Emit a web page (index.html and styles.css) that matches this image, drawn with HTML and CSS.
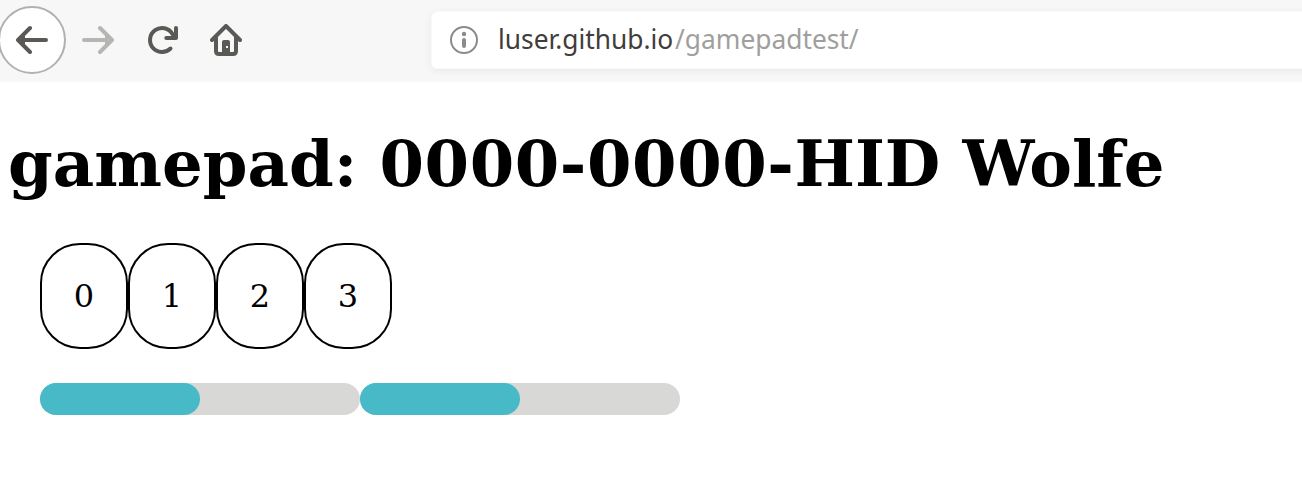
FILE: index.html
```html
<!DOCTYPE html>
<html lang="en">
<head>
<meta charset="utf-8">
<title>Gamepad test</title>
<link rel="stylesheet" href="styles.css">
</head>
<body>
<header class="toolbar">
  <nav class="nav">
    <button class="nav-button back" aria-label="Back">
      <svg class="icon" viewBox="0 0 32 32"><path d="M30 16H3M14 4 2 16l12 12"/><path class="solid" d="M2 16l7-6v12z"/></svg>
    </button>
    <button class="nav-button forward" aria-label="Forward">
      <svg class="icon" viewBox="0 0 32 32"><path d="M2 16h27M18 4l12 12-12 12"/><path class="solid" d="M30 16l-7-6v12z"/></svg>
    </button>
    <button class="nav-button reload" aria-label="Reload">
      <svg class="icon" viewBox="0 0 32 32"><path d="M24.5 24.5A12 12 0 1 1 26.4 10M20.3 14H30V4"/><path class="solid" d="M23 14l7-7v7z"/></svg>
    </button>
    <button class="nav-button home" aria-label="Home">
      <svg class="icon" viewBox="0 0 32 32"><path d="M2 16 16 2l14 14M6 13v14q0 3 3 3h14q3 0 3-3V13"/><path class="solid" fill-rule="evenodd" d="M12 30V18q0-2 2-2h4q2 0 2 2v12zM16 22v2h2v-2z"/></svg>
    </button>
  </nav>
  <div class="address">
    <svg class="info" viewBox="0 0 28 28"><circle cx="14" cy="14" r="13"/><path d="M14 14v6"/><circle class="dot" cx="14" cy="8" r="2.2"/></svg>
    <div class="url"><span class="host">luser.github.io</span><span class="path">/gamepadtest/</span></div>
  </div>
</header>
<main class="page">
  <h1 class="title">gamepad: <span class="device-id">0000-0000-</span>HID Wolfe</h1>
  <div class="buttons">
    <span class="button">0</span><span class="button">1</span><span class="button">2</span><span class="button">3</span>
  </div>
  <div class="axes">
    <div class="axis"><div class="value" style="width: 50%"></div></div>
    <div class="axis"><div class="value" style="width: 50%"></div></div>
  </div>
</main>
</body>
</html>
```
FILE: styles.css
```css
* { box-sizing: border-box; }
body {
  margin: 0;
  background: #fff;
  color: #000;
  font-family: "DejaVu Serif", serif;
  overflow: hidden;
}
.toolbar {
  display: flex;
  height: 82px;
  padding-top: 6px;
  background: #f7f7f7;
  overflow: hidden;
}
.nav {
  display: flex;
  flex: none;
  width: 432px;
  margin-left: -2px;
}
.nav-button {
  display: flex;
  align-items: center;
  justify-content: center;
  width: 64px;
  height: 68px;
  padding: 0;
  border: 0;
  background: none;
  color: #5b5956;
}
.back {
  width: 68px;
  border: 2px solid #b1b1b1;
  border-radius: 50%;
  background: #fff;
}
.forward { color: #b5b5b4; }
.icon {
  flex: none;
  width: 32px;
  height: 32px;
  fill: none;
  stroke: currentColor;
  stroke-width: 4;
  stroke-linecap: round;
  stroke-linejoin: round;
}
.solid { fill: currentColor; stroke: none; }
.address {
  display: flex;
  align-items: center;
  flex: none;
  width: 900px;
  height: 58px;
  margin: 5px 0 0 1px;
  padding-left: 19px;
  border-radius: 6px;
  background: #fff;
  border: 1px solid #f9f9f9;
  box-shadow: 0 2px 8px rgba(0, 0, 0, 0.06);
}
.info {
  flex: none;
  width: 28px;
  height: 28px;
  margin-left: -1px;
  fill: none;
  stroke: #8b8b8a;
  stroke-width: 2;
}
.info path { stroke-width: 4; stroke-linecap: round; }
.info .dot { fill: #8b8b8a; stroke: none; }
.url {
  display: flex;
  margin: -5px 0 0 20px;
  font: 28px/56px "Noto Sans", sans-serif;
  white-space: nowrap;
  transform: scaleX(0.94);
  transform-origin: 0 50%;
}
.host { color: #403d3a; }
.path { margin-left: 2px; color: #9f9f9e; }
.page { padding: 0 8px; }
.title {
  margin: 0;
  padding-top: 44px;
  font-size: 64px;
  line-height: 76px;
  white-space: nowrap;
}
.device-id { letter-spacing: 0.55px; }
.buttons {
  display: flex;
  margin: 41px 0 0 32px;
}
.button {
  display: flex;
  align-items: center;
  justify-content: center;
  width: 88px;
  height: 106px;
  border: 2px solid #000;
  border-radius: 40px;
  font-size: 32px;
}
.axes {
  display: flex;
  margin: 34px 0 0 32px;
}
.axis {
  width: 320px;
  height: 32px;
  border-radius: 16px;
  background: #d8d8d6;
}
.value {
  height: 100%;
  border-radius: 16px;
  background: #48b9c7;
}
```
